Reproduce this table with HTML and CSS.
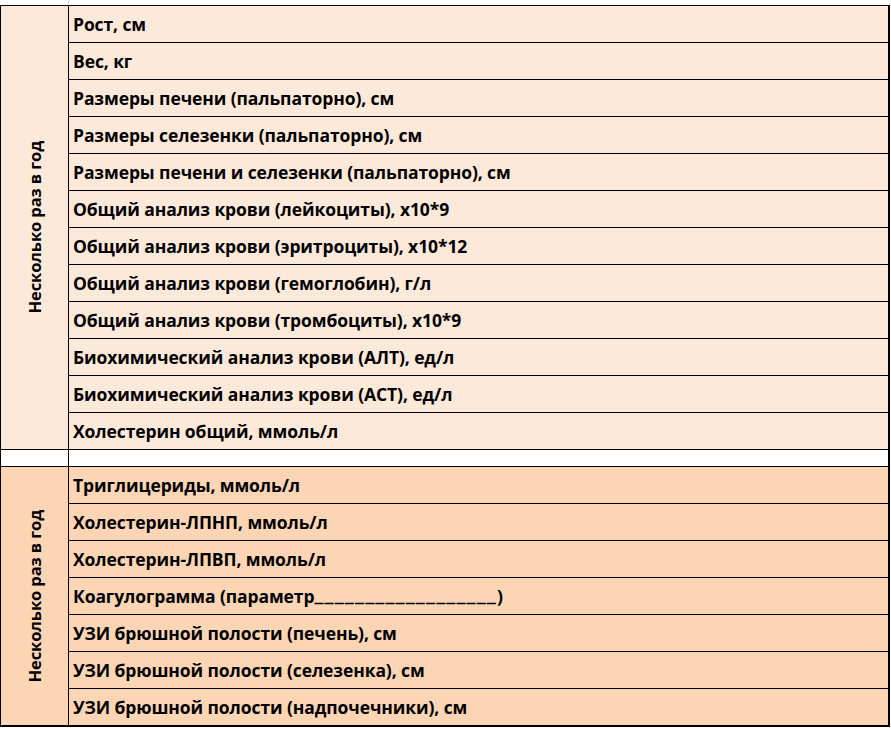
FILE: index.html
```html
<!DOCTYPE html>
<html lang="ru">
<head>
<meta charset="utf-8">
<link rel="stylesheet" href="styles.css">
</head>
<body>
<div class="strip"><div class="strip-cell"></div></div>
<table class="sheet">
  <colgroup><col class="col-side"><col class="col-main"></colgroup>
  <tbody class="sec sec-a">
    <tr><td class="side" rowspan="12"><span class="vlabel">Несколько раз в год</span></td><td>Рост, см</td></tr>
    <tr><td>Вес, кг</td></tr>
    <tr><td>Размеры печени (пальпаторно), см</td></tr>
    <tr><td>Размеры селезенки (пальпаторно), см</td></tr>
    <tr><td>Размеры печени и селезенки (пальпаторно), см</td></tr>
    <tr><td>Общий анализ крови (лейкоциты), х10*9</td></tr>
    <tr><td>Общий анализ крови (эритроциты), х10*12</td></tr>
    <tr><td>Общий анализ крови (гемоглобин), г/л</td></tr>
    <tr><td>Общий анализ крови (тромбоциты), х10*9</td></tr>
    <tr><td>Биохимический анализ крови (АЛТ), ед/л</td></tr>
    <tr><td>Биохимический анализ крови (АСТ), ед/л</td></tr>
    <tr><td>Холестерин общий, ммоль/л</td></tr>
  </tbody>
  <tbody class="sec-gap">
    <tr class="gap"><td></td><td></td></tr>
  </tbody>
  <tbody class="sec sec-b">
    <tr><td class="side" rowspan="7"><span class="vlabel">Несколько раз в год</span></td><td>Триглицериды, ммоль/л</td></tr>
    <tr><td>Холестерин-ЛПНП, ммоль/л</td></tr>
    <tr><td>Холестерин-ЛПВП, ммоль/л</td></tr>
    <tr><td>Коагулограмма (параметр<span class="blank">__________________</span>)</td></tr>
    <tr><td>УЗИ брюшной полости (печень), см</td></tr>
    <tr><td>УЗИ брюшной полости (селезенка), см</td></tr>
    <tr><td>УЗИ брюшной полости (надпочечники), см</td></tr>
  </tbody>
</table>
</body>
</html>
```
FILE: styles.css
```css
html, body {
  margin: 0;
  padding: 0;
  background: #ffffff;
}
body {
  font-family: "Open Sans", "Liberation Sans", sans-serif;
  font-weight: 700;
  color: #000;
}
.strip {
  height: 5px;
  display: flex;
}
.strip-cell {
  width: 68px;
  border-right: 1px solid #d9d9d9;
}
.sheet {
  border-collapse: collapse;
  width: 890px;
  table-layout: fixed;
}
.col-side {
  width: 68px;
}
.sheet td {
  border: 1px solid #000;
  padding: 0 0 0 4px;
  font-size: 17.5px;
  line-height: 22px;
  letter-spacing: -0.1px;
  white-space: nowrap;
  vertical-align: middle;
  overflow: hidden;
}
.sheet tr {
  height: 37px;
}
.sheet td.side {
  padding: 0;
}
.sheet td:last-child {
  border-right: 2px solid #000;
}
.sec-a td {
  background: #fde9d9;
}
.sec-b td {
  background: #fcd5b4;
}
.sec-b tr:last-child td,
.sec-b td.side {
  border-bottom: 2px solid #000;
}
.sheet tr.gap {
  height: 17px;
}
.gap td {
  background: #ffffff;
}
.blank {
  font-size: 22px;
  line-height: 0;
  letter-spacing: 1.1px;
  vertical-align: 2px;
}
.vlabel {
  display: block;
  writing-mode: vertical-rl;
  transform: rotate(180deg);
  margin: 0 auto;
  font-size: 16.5px;
  line-height: 20px;
}
```
